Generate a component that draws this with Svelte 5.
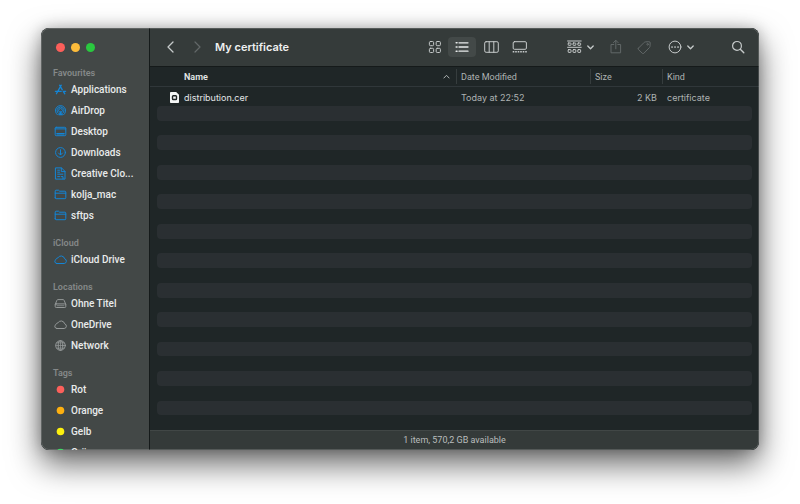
<script>
  const groups = [
    {
      title: 'Favourites',
      items: [
        { name: 'Applications', icon: 'apps' },
        { name: 'AirDrop', icon: 'airdrop' },
        { name: 'Desktop', icon: 'desktop' },
        { name: 'Downloads', icon: 'download' },
        { name: 'Creative Clo...', icon: 'file' },
        { name: 'kolja_mac', icon: 'folder' },
        { name: 'sftps', icon: 'folder' }
      ]
    },
    { title: 'iCloud', items: [{ name: 'iCloud Drive', icon: 'cloud' }] },
    {
      title: 'Locations',
      muted: true,
      items: [
        { name: 'Ohne Titel', icon: 'disk' },
        { name: 'OneDrive', icon: 'cloud' },
        { name: 'Network', icon: 'globe' }
      ]
    },
    {
      title: 'Tags',
      items: [
        { name: 'Rot', color: '#fc605b' },
        { name: 'Orange', color: '#fdb010' },
        { name: 'Gelb', color: '#fdf00e' },
        { name: 'Grün', color: '#1fd14c' }
      ]
    }
  ]

  const views = ['icons', 'list', 'columns', 'gallery']
  let view = $state('list')

  const files = [{ name: 'distribution.cer', date: 'Today at 22:52', size: '2 KB', kind: 'certificate' }]
  const emptyRows = Array(22).fill(0)
</script>

{#snippet chevron()}
  <svg class="chevron" width="7" height="5" viewBox="0 0 7 5"><path d="M.8 1l2.7 2.7L6.2 1" stroke-width="1.3" /></svg>
{/snippet}

<div class="desktop">
  <div class="window">
    <aside>
      <div class="lights">
        <button class="close" aria-label="Close"></button>
        <button class="minimize" aria-label="Minimize"></button>
        <button class="zoom" aria-label="Zoom"></button>
      </div>
      <nav>
        {#each groups as group}
          <h2>{group.title}</h2>
          <ul class:muted={group.muted}>
            {#each group.items as item}
              <li>
                <a href="#{item.name}">
                  <svg width="13" height="13" viewBox="0 0 13 13">
                    {#if item.color}
                      <circle cx="6.5" cy="6.5" r="3.8" fill={item.color} stroke="none" />
                    {:else if item.icon === 'apps'}
                      <path d="M7.3 2.2L3.2 9.3M5.6 2.2l2.7 4.6M9.6 8.8l1.2 2M2.4 10.7l.5-.9M1.4 8.3h5.8M9.2 8.3h2.4" stroke-width="1.3" />
                    {:else if item.icon === 'airdrop'}
                      <path d="M3.3 10.7a5.1 5.1 0 1 1 6.4 0M4.2 9.2a3.5 3.5 0 1 1 4.6 0M5.2 7.8a1.9 1.9 0 1 1 2.6 0" />
                      <path d="M6.5 7.2L4.6 11h3.8z" fill="currentColor" stroke-width=".6" />
                    {:else if item.icon === 'desktop'}
                      <rect x="1.2" y="2.3" width="10.6" height="8.4" rx="1" /><path d="M1.2 3.9h10.6" /><path d="M3 8.7h7" stroke-width="1.6" />
                    {:else if item.icon === 'download'}
                      <circle cx="6.5" cy="6.5" r="4.9" /><path d="M6.5 3.7v5M4.5 7l2 2 2-2" />
                    {:else if item.icon === 'file'}
                      <path d="M1.8.9h5.7l3.5 3.5v7.7H1.8zM7.3.9v3.7H11M3.7 3.2h1.8M3.7 5.2h1.8M3.7 7.2h5.2M3.7 9.6h1.8M7.2 9.6H9v2.2" />
                    {:else if item.icon === 'folder'}
                      <path d="M1.2 9.8V3.1q0-.9.9-.9h2.4l1.1 1h5.3q.9 0 .9.9v5.7q0 .9-.9.9H2.1q-.9 0-.9-.9zM1.2 5.2h10.6" />
                    {:else if item.icon === 'cloud'}
                      <path d="M2.9 10.5h7.3a2.4 2.4 0 0 0 .4-4.7A3.6 3.6 0 0 0 3.9 4.9 2.1 2.1 0 0 0 2 6.5 2.1 2.1 0 0 0 2.9 10.5z" />
                    {:else if item.icon === 'disk'}
                      <path d="M1.2 7.4l1.7-4.1q.3-.7 1-.7h5.2q.7 0 1 .7l1.7 4.1" /><rect x="1.2" y="6.9" width="10.6" height="3.6" rx="1" /><path d="M3 8.7h7" stroke-width=".7" />
                    {:else}
                      <circle cx="6.5" cy="6.5" r="4.8" /><ellipse cx="6.5" cy="6.5" rx="2.3" ry="4.8" /><path d="M6.5 1.7v9.6M1.7 6.5h9.6M2.6 3.9h7.8M2.6 9.1h7.8" stroke-width=".7" />
                    {/if}
                  </svg>
                  {item.name}
                </a>
              </li>
            {/each}
          </ul>
        {/each}
      </nav>
    </aside>

    <main>
      <header>
        <button class="arrow" aria-label="Back"><svg width="7" height="12" viewBox="0 0 7 12"><path d="M6 1L1 6l5 5" stroke-width="1.3" /></svg></button>
        <button class="arrow off" aria-label="Forward" disabled><svg width="7" height="12" viewBox="0 0 7 12"><path d="M1 1l5 5-5 5" stroke-width="1.2" /></svg></button>
        <h1>My certificate</h1>

        <div class="views">
          {#each views as v}
            <button class:active={view === v} aria-label="Show as {v}" onclick={() => (view = v)}>
              <svg width="16" height="14" viewBox="0 0 16 14">
                {#if v === 'icons'}
                  <rect x="3.4" y="1.5" width="4.2" height="4.2" rx="1" /><rect x="10.2" y="1.5" width="4.2" height="4.2" rx="1" />
                  <rect x="3.4" y="8.3" width="4.2" height="4.2" rx="1" /><rect x="10.2" y="8.3" width="4.2" height="4.2" rx="1" />
                {:else if v === 'list'}
                  <path d="M5 2.8h9M5 7h9M5 11.2h9" stroke-width="1.3" />
                  <path d="M2.2 2.8h.8M2.2 7h.8M2.2 11.2h.8" stroke-width="1.6" />
                {:else if v === 'columns'}
                  <rect x="1.7" y="1.7" width="13.6" height="10.6" rx="1.4" /><path d="M6.2 1.7v10.6M10.8 1.7v10.6" />
                {:else}
                  <rect x="1.2" y="1.7" width="13.2" height="7.6" rx="1.2" /><path d="M.7 11.8h14.2" stroke-width="1.6" stroke-dasharray="1.6 .9" stroke-linecap="butt" />
                {/if}
              </svg>
            </button>
          {/each}
        </div>

        <button class="group" aria-label="Group items">
          <svg width="15" height="14" viewBox="0 0 15 14">
            <path d="M.6 1h13.6M.6 7.3h13.6" />
            <rect x="1.2" y="3" width="2.8" height="2.3" rx=".5" /><rect x="6" y="3" width="2.8" height="2.3" rx=".5" /><rect x="10.8" y="3" width="2.8" height="2.3" rx=".5" />
            <rect x="1.2" y="9.6" width="2.8" height="2.8" rx=".5" /><rect x="6" y="9.6" width="2.8" height="2.8" rx=".5" /><rect x="10.8" y="9.6" width="2.8" height="2.8" rx=".5" />
          </svg>
          {@render chevron()}
        </button>
        <div class="pair">
          <button class="off" aria-label="Share" disabled>
            <svg width="14" height="16" viewBox="0 0 14 16"><path d="M4.8 5.5H2v8.3h9.6V5.5H8.8M6.8 9.8V1.4M4.4 3.7l2.4-2.4 2.4 2.4" /></svg>
          </button>
          <button class="off" aria-label="Edit tags" disabled>
            <svg width="15" height="15" viewBox="0 0 15 15"><path d="M1.4 8.2l5.8-5.8q.5-.5 1.2-.5l3.5-.2q1.3 0 1.3 1.3l-.2 3.3q0 .7-.5 1.2l-5.7 5.8q-.8.7-1.5 0L1.4 9.5q-.6-.7 0-1.3z" /><circle cx="10.6" cy="4.3" r=".8" /></svg>
          </button>
        </div>
        <button class="more" aria-label="Action">
          <svg width="14" height="14" viewBox="0 0 14 14"><circle cx="7" cy="7" r="5.9" /><path d="M4 7h.1M7 7h.1M10 7h.1" stroke-width="1.7" /></svg>
          {@render chevron()}
        </button>
        <button class="search" aria-label="Search">
          <svg width="14" height="14" viewBox="0 0 14 14"><circle cx="6" cy="5.9" r="4.4" stroke-width="1.2" /><path d="M9.3 9.2l3.5 3.5" stroke-width="1.4" /></svg>
        </button>
      </header>

      <table>
        <thead>
          <tr>
            <th class="name">
              <span>Name <svg width="7" height="5" viewBox="0 0 7 5"><path d="M.9 4L3.5 1.3 6.1 4" /></svg></span>
            </th>
            <th class="date">Date Modified</th>
            <th class="size">Size</th>
            <th class="kind">Kind</th>
          </tr>
        </thead>
        <tbody>
          {#each files as file}
            <tr>
              <td class="name">
                <svg width="9" height="11" viewBox="0 0 9 11">
                  <path d="M.8 0h5.4L9 2.8v7.4q0 .8-.8.8H.8q-.8 0-.8-.8V.8Q0 0 .8 0z" fill="#f4f6f6" stroke="none" />
                  <rect x="2.5" y="3.7" width="4" height="3.8" rx=".8" stroke="#1f2627" stroke-width="1.4" />
                </svg>{file.name}
              </td>
              <td>{file.date}</td>
              <td class="amount">{file.size}</td>
              <td>{file.kind}</td>
            </tr>
          {/each}
        </tbody>
      </table>
      <div class="stripes">
        {#each emptyRows as _}
          <div></div>
        {/each}
      </div>

      <footer>1 item, 570,2 GB available</footer>
    </main>
  </div>
</div>

<style>
  :global(body) {
    background: #fff;
  }
  .desktop {
    box-sizing: border-box;
    height: 100vh;
    padding: 28px 41px 54px;
    overflow: hidden;
    font-family: Roboto, "Liberation Sans", sans-serif;
    font-size: 10px;
    color: #e4e7e7;
  }
  .window {
    position: relative;
    display: flex;
    height: 100%;
    border-radius: 8px;
    overflow: hidden;
    background: #1f2627;
    box-shadow: 0 14px 32px rgba(0, 0, 0, 0.6), 0 0 14px rgba(0, 0, 0, 0.22);
  }
  .window::after {
    content: '';
    position: absolute;
    inset: 0;
    border: 1px solid rgba(255, 255, 255, 0.16);
    border-radius: 8px;
    pointer-events: none;
  }
  svg {
    display: block;
    flex: none;
    fill: none;
    stroke: currentColor;
    stroke-linecap: round;
    stroke-linejoin: round;
  }
  button {
    display: flex;
    align-items: center;
    justify-content: center;
    flex: none;
    padding: 0;
    border: 0;
    background: none;
    color: #c6caca;
  }

  aside {
    box-sizing: border-box;
    flex: none;
    width: 109px;
    border-right: 1px solid #151a1a;
    background: #434847;
    overflow: hidden;
  }
  .lights {
    display: flex;
    gap: 6px;
    padding: 15px 15px;
  }
  .lights button {
    width: 9px;
    height: 9px;
    border-radius: 50%;
  }
  .lights .close {
    background: #fc5f5a;
  }
  .lights .minimize {
    background: #fdbc3b;
  }
  .lights .zoom {
    background: #2ac83f;
  }
  h2 {
    margin: 0;
    padding-left: 12px;
    font-size: 9px;
    line-height: 12px;
    font-weight: 600;
    color: #858989;
  }
  ul {
    margin: 0 0 11px;
    padding: 0;
    list-style: none;
  }
  li a {
    display: flex;
    align-items: center;
    gap: 4px;
    height: 21px;
    padding-left: 13px;
    font-weight: 500;
    color: #e9ebeb;
    text-decoration: none;
    white-space: nowrap;
  }
  li svg {
    color: #1385d6;
  }
  .muted svg {
    color: #949898;
  }

  main {
    display: flex;
    flex: 1;
    flex-direction: column;
    min-width: 0;
  }
  header {
    display: flex;
    align-items: center;
    flex: none;
    height: 38px;
    padding: 0 7px;
    border-bottom: 1px solid #151a1a;
    background: #353b3a;
  }
  header button {
    width: 28px;
    height: 20px;
  }
  header .arrow {
    width: 27px;
  }
  header .off {
    color: #626868;
  }
  h1 {
    flex: 1;
    margin: 0 0 0 4px;
    font-family: Inter, "Liberation Sans", sans-serif;
    font-size: 11px;
    line-height: 16px;
    font-weight: 600;
    color: #eff1f1;
    white-space: nowrap;
  }
  .views {
    display: flex;
    margin-right: 32px;
  }
  .views button {
    border-radius: 4px;
  }
  .views button + button + button {
    margin-left: 1px;
  }
  .views .active {
    background: #434948;
    color: #e9ecec;
  }
  .pair {
    display: flex;
    margin: 0 8px;
  }
  .chevron {
    margin-left: 5px;
  }
  header .more {
    width: 30px;
    margin-right: 28px;
  }

  table {
    width: 100%;
    table-layout: fixed;
    border-collapse: separate;
    border-spacing: 0;
  }
  th,
  td {
    padding: 0 5px;
    text-align: left;
    font-weight: 400;
    color: #aeb3b3;
    white-space: nowrap;
  }
  th {
    height: 19px;
    border-bottom: 1px solid #30373a;
    background: linear-gradient(#363d3e, #363d3e) left center / 1px 15px no-repeat;
    font-size: 9px;
  }
  th.name {
    padding: 0 6px 0 34px;
    background: none;
    font-weight: 600;
    color: #e4e7e7;
  }
  th span {
    display: flex;
    align-items: center;
    justify-content: space-between;
  }
  th svg {
    color: #aeb3b3;
  }
  .date {
    width: 124px;
  }
  .size {
    width: 62px;
  }
  .kind {
    width: 87px;
  }
  td {
    height: 15px;
    padding-top: 3px;
    padding-bottom: 1px;
    font-family: Inter, "Liberation Sans", sans-serif;
    font-size: 9px;
    line-height: 15px;
  }
  td.name {
    display: flex;
    align-items: center;
    gap: 5px;
    padding-left: 20px;
    color: #e4e7e7;
  }
  .amount {
    text-align: right;
  }
  .stripes {
    display: flex;
    flex: 1;
    flex-direction: column;
    padding: 0 7px;
  }
  .stripes div {
    flex: 1;
    border-radius: 4px;
  }
  .stripes div:nth-child(odd) {
    background: #2a2f32;
  }
  footer {
    flex: none;
    height: 19px;
    border-top: 1px solid #414746;
    background: #343a39;
    font-size: 9px;
    line-height: 19px;
    text-align: center;
    color: #b9bdbd;
  }
</style>
